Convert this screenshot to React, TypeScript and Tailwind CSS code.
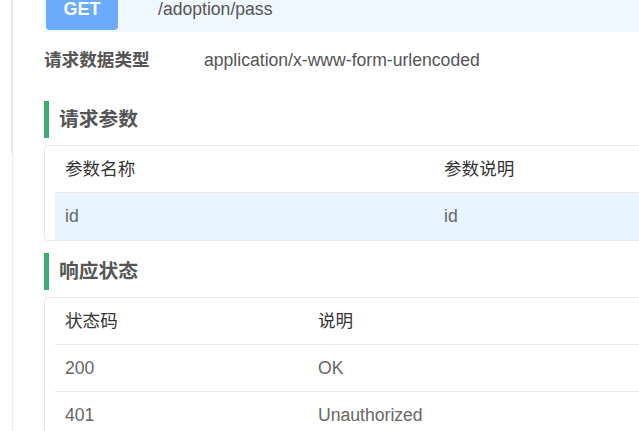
const FONT = { fontFamily: '"Liberation Sans", "Noto Sans CJK SC", sans-serif' };

type Row = [string, string];

function DocTable({ head, rows, firstCol, highlight }: { head: Row; rows: Row[]; firstCol: string; highlight?: boolean }) {
  return (
    <div className="mt-[7px] w-[680px] rounded-[4px] border border-[#e8e8e8] pl-[10px]">
      <div className="flex h-[47px] items-center border-b border-[#e8e8e8] text-[17.6px] text-[#333]">
        <div className={`${firstCol} pl-[10px]`}>{head[0]}</div>
        <div className="pl-[11px]">{head[1]}</div>
      </div>
      {rows.map((r, i) => (
        <div
          key={i}
          className={`flex h-[47px] items-center text-[17.6px] text-[#666] ${
            i < rows.length - 1 ? "border-b border-[#e8e8e8]" : ""
          } ${highlight ? "bg-[#e8f5fe]" : ""}`}
        >
          <div className={`${firstCol} pl-[10px]`}>{r[0]}</div>
          <div className="pl-[11px]">{r[1]}</div>
        </div>
      ))}
    </div>
  );
}

function SectionTitle({ children, className }: { children: React.ReactNode; className: string }) {
  return (
    <div className={`flex h-[37px] items-center ${className}`}>
      <div className="h-full w-[5px] bg-[#3dad72]" />
      <div className="ml-[10px] text-[19.8px] font-bold leading-none text-[#555]">{children}</div>
    </div>
  );
}

export default function App() {
  return (
    <div className="relative flex h-[431px] w-[639px] overflow-hidden bg-white" style={FONT}>
      {/* left rail */}
      <div className="ml-[11px] flex w-[2px] shrink-0 flex-col">
        <div className="h-[153px] w-[2px] bg-[#e6e6e6]" />
        <div className="ml-px w-px flex-1 bg-[#ececec]" />
      </div>

      <div className="ml-[31px] w-[700px] shrink-0">
        {/* method strip */}
        <div className="flex h-[32px] items-start bg-[#eff7ff]">
          <div className="ml-[2px] flex h-[30px] w-[72px] items-start justify-center rounded-b-[4px] bg-[#6aabfb] text-[18px] font-bold leading-[18px] text-white">
            GET
          </div>
          <div className="ml-[40px] text-[17.6px] leading-[18px] text-[#555]">/adoption/pass</div>
        </div>

        {/* content type */}
        <div className="flex h-[56px] items-center text-[#555]">
          <div className="w-[160px] text-[17.6px] font-bold">请求数据类型</div>
          <div className="text-[17.6px]">application/x-www-form-urlencoded</div>
        </div>

        <SectionTitle className="mt-[13px]">请求参数</SectionTitle>
        <DocTable head={["参数名称", "参数说明"]} rows={[["id", "id"]]} firstCol="w-[378px]" highlight />

        <SectionTitle className="mt-[12px]">响应状态</SectionTitle>
        <DocTable
          head={["状态码", "说明"]}
          rows={[
            ["200", "OK"],
            ["401", "Unauthorized"],
          ]}
          firstCol="w-[252px]"
        />
      </div>
    </div>
  );
}
